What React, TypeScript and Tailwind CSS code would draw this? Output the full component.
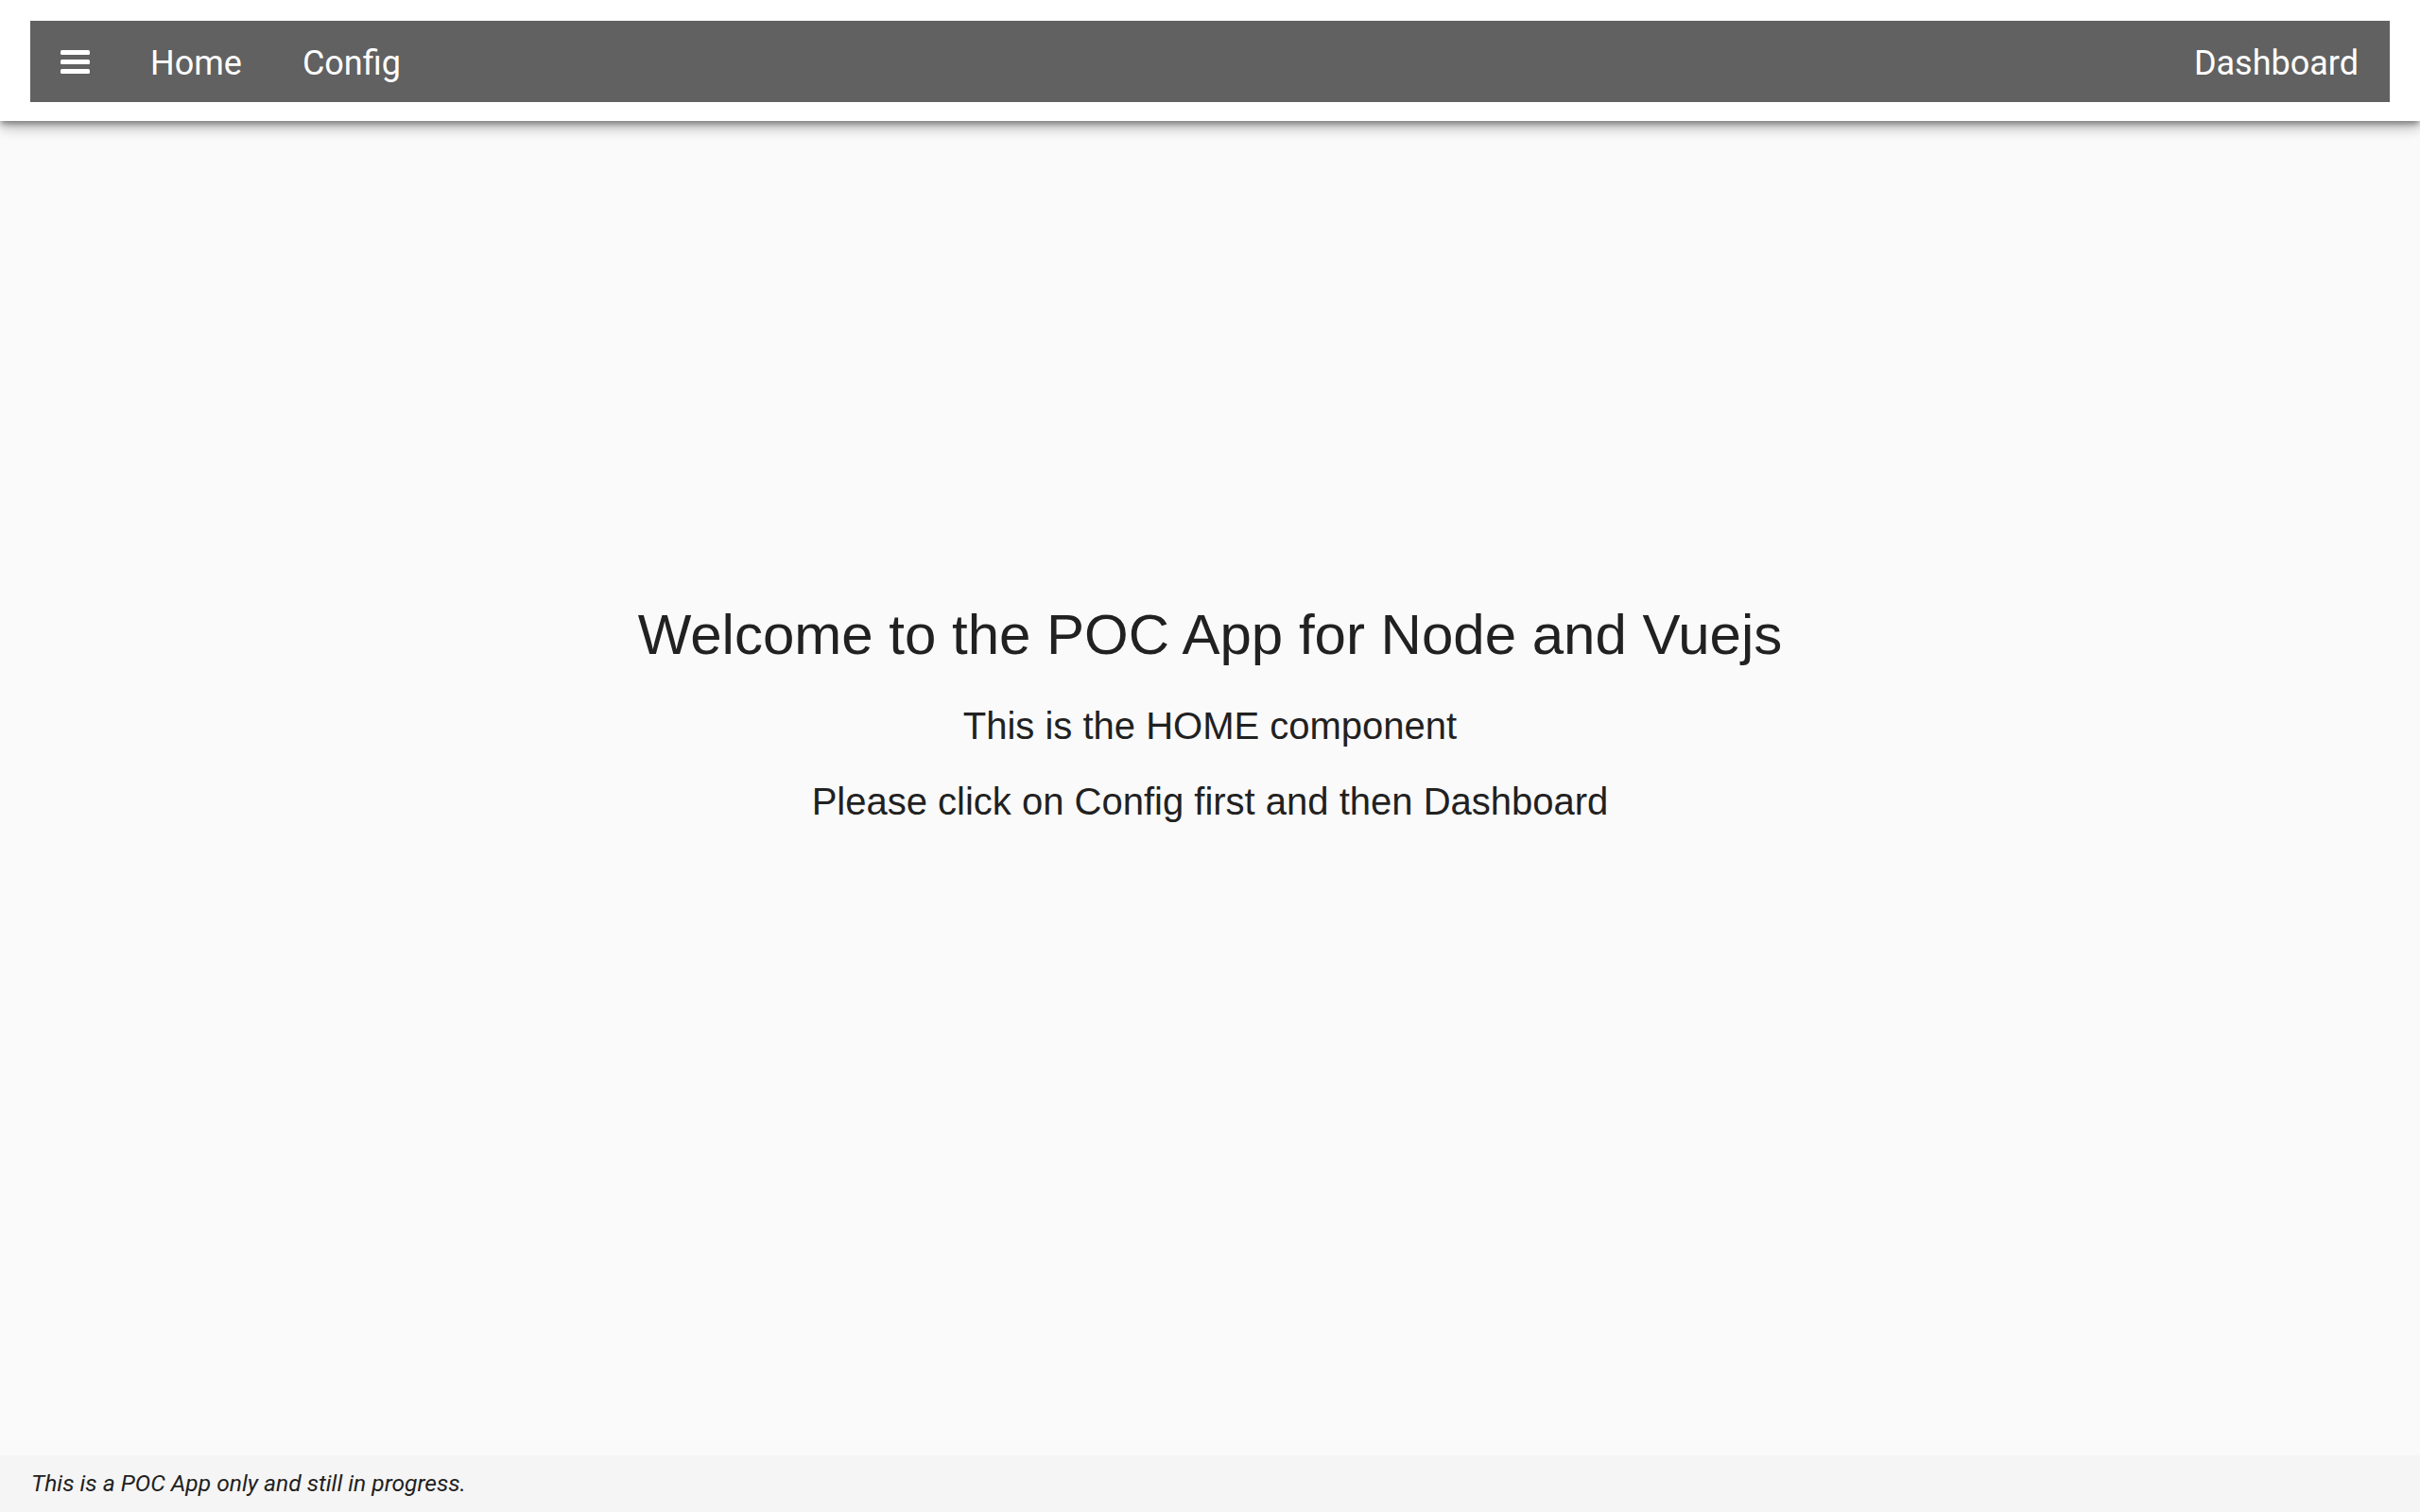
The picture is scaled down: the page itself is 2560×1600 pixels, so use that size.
const navLinks: string[] = ["Home", "Config"];

const MenuIcon = () => (
  <svg width="31" height="25" viewBox="0 0 31 25" aria-hidden="true">
    <rect x="0" y="0" width="31" height="5" rx="1.5" fill="#ffffff" />
    <rect x="0" y="10" width="31" height="5" rx="1.5" fill="#ffffff" />
    <rect x="0" y="20" width="31" height="5" rx="1.5" fill="#ffffff" />
  </svg>
);

const App = () => {
  return (
    <div className="min-h-screen flex flex-col bg-[#fafafa] text-[#212121]">
      {/* header */}
      <header className="h-[128px] shrink-0 bg-white px-[32px] pt-[22px] shadow-[0_4px_6px_-1px_rgba(0,0,0,0.35),0_8px_12px_0_rgba(0,0,0,0.18),0_2px_20px_0_rgba(0,0,0,0.12)] relative z-10">
        <nav className="h-[86px] bg-[#616161] flex items-center pl-[32px] pr-[33px] font-['Roboto',sans-serif] text-[36px] text-white">
          <button aria-label="Open menu" className="flex items-center mr-[64px]">
            <MenuIcon />
          </button>
          <div className="flex items-center gap-[64px] pt-[3px]">
            {navLinks.map((link) => (
              <a key={link} className="leading-none cursor-pointer">
                {link}
              </a>
            ))}
          </div>
          <a className="ml-auto pt-[3px] leading-none cursor-pointer">Dashboard</a>
        </nav>
      </header>

      {/* home */}
      <main className="flex-1 flex flex-col items-center pt-[508px] font-['Liberation_Sans',Arial,sans-serif]">
        <h1 className="text-[60px] leading-[72px] mb-[36px]">
          Welcome to the POC App for Node and Vuejs
        </h1>
        <p className="text-[40px] leading-[48px] mb-[32px]">
          This is the HOME component
        </p>
        <p className="text-[40px] leading-[48px]">
          Please click on Config first and then Dashboard
        </p>
      </main>

      <footer className="h-[60px] shrink-0 bg-[#f5f5f5] flex items-center px-[33px] font-['Roboto',sans-serif] italic text-[24.6px] text-[#212121]">
        This is a POC App only and still in progress.
      </footer>
    </div>
  );
};

export default App;
